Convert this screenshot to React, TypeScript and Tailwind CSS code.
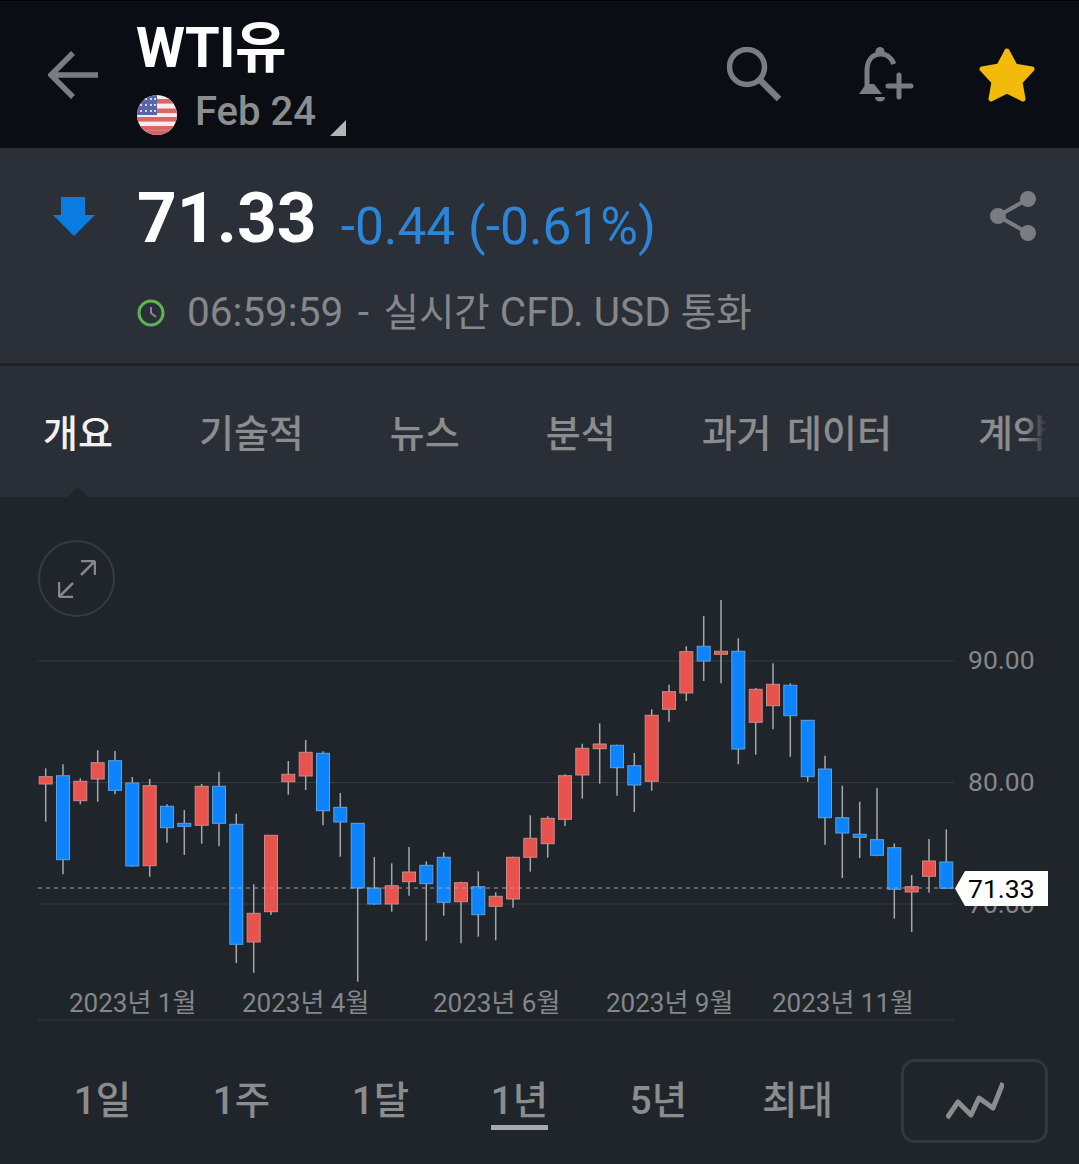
const FONT = "font-['Roboto','Noto_Sans_CJK_KR',sans-serif]"

// x, high, body top, body bottom, low, up (red)
const CANDLES: [number, number, number, number, number, boolean][] = [
  [45.7, 768.3, 776.7, 784, 821.7, true],
  [63, 764.3, 775.7, 859.7, 874.3, false],
  [80.3, 778.3, 781.3, 800.7, 804.3, true],
  [97.7, 750.3, 762.7, 779, 801.7, true],
  [115, 751, 760.7, 790.3, 794.3, false],
  [132.3, 777, 783, 866, 866.7, false],
  [149.7, 779, 785.7, 865.7, 876.7, true],
  [167, 804.3, 806.3, 827.7, 842.7, false],
  [184.3, 810, 823.3, 826.3, 855, false],
  [201.7, 784, 786.3, 825.3, 843.7, true],
  [219, 771.7, 786.3, 823.3, 846.3, false],
  [236.3, 813.7, 824.3, 944.3, 963, false],
  [253.7, 884.3, 913.3, 942, 972.7, true],
  [271, 835.3, 835.3, 911.7, 915, true],
  [288.3, 761, 774.3, 781.7, 794.7, true],
  [305.7, 740, 752.3, 776, 790, true],
  [323, 751.3, 753.3, 810.7, 825.3, false],
  [340.3, 793, 807.3, 822, 856.7, false],
  [357.7, 823.3, 823.3, 888, 981.7, false],
  [374.3, 857, 888, 904, 905, false],
  [391.7, 863.3, 885.7, 904, 911.7, true],
  [409, 847, 872, 881.7, 895.7, true],
  [426.3, 861.3, 865.3, 883.7, 940.7, false],
  [443.7, 852.3, 857.3, 902.3, 915.7, false],
  [461, 881.7, 882.7, 901.7, 943.3, true],
  [478.3, 871.3, 886.7, 914.7, 936.7, false],
  [495.7, 892.3, 896.3, 906.3, 940.3, true],
  [513, 856.7, 857.3, 899, 907.7, true],
  [530.3, 815.3, 838.3, 857.3, 871.7, true],
  [547.7, 816.3, 818.3, 843.7, 857.7, true],
  [565, 774.3, 775.7, 819.3, 826, true],
  [582.3, 743.7, 748.3, 775, 798.7, true],
  [599.7, 723.3, 744, 748.7, 783.7, true],
  [617, 744.7, 745.3, 767.7, 795.7, false],
  [634.3, 753, 765.7, 785, 812, false],
  [651.7, 709.3, 715.3, 781.3, 790.7, true],
  [669, 684.7, 691.7, 709.3, 721.7, true],
  [686.3, 646.3, 651.7, 693, 701, true],
  [703.7, 616, 646.3, 661, 681, false],
  [721, 600, 651.3, 654.3, 683.3, true],
  [738.3, 638.3, 651.3, 749, 764.3, false],
  [755.7, 688, 689.3, 722.3, 754.7, true],
  [773, 663.3, 684.3, 705.7, 729.3, true],
  [790.3, 683.3, 685.3, 715.7, 756.7, false],
  [807.7, 720.3, 720.3, 776.7, 781.7, false],
  [825, 755.7, 769, 817.7, 844.7, false],
  [842.3, 785.7, 817.7, 833, 878, false],
  [859.7, 801.7, 834.3, 837.3, 858, false],
  [877, 788, 839.7, 855.3, 856.3, false],
  [894.3, 843.3, 847.7, 889.3, 918.7, false],
  [911.7, 875, 886.7, 892, 932, true],
  [929, 839, 861, 876.3, 892.7, true],
  [946.3, 829.3, 862, 888.3, 888.3, false],
]

const TABS = ['개요', '기술적', '뉴스', '분석', '과거 데이터', '계약']
const RANGES = ['1일', '1주', '1달', '1년', '5년', '최대']
const MONTHS = [
  { label: '2023년 1월', left: 'left-[69px]' },
  { label: '2023년 4월', left: 'left-[242px]' },
  { label: '2023년 6월', left: 'left-[433px]' },
  { label: '2023년 9월', left: 'left-[606px]' },
  { label: '2023년 11월', left: 'left-[772px]' },
]

function Flag() {
  return (
    <svg viewBox="0 0 40 40" className="w-10 h-10 shrink-0">
      <defs>
        <clipPath id="flag">
          <circle cx="20" cy="20" r="20" />
        </clipPath>
      </defs>
      <g clipPath="url(#flag)">
        <rect width="40" height="40" fill="#f1eeee" />
        {[4, 13.5, 22, 31].map((y) => (
          <rect key={y} x="0" y={y} width="40" height="4.6" fill="#e0636b" />
        ))}
        <rect y="35.5" width="40" height="5" fill="#d9606a" />
        <rect width="20" height="20" fill="#5b64a6" />
        {[4, 10, 16].map((y) =>
          [4, 9, 14, 18].map((x) => <circle key={`${x}-${y}`} cx={x} cy={y} r="1.1" fill="#eef" />),
        )}
      </g>
    </svg>
  )
}

function Chart() {
  return (
    <svg viewBox="0 497 1079 543" className="block w-[1079px] h-[543px]">
      {[661, 782.5, 904].map((y) => (
        <line key={y} x1="38" x2="954" y1={y} y2={y} stroke="#363b42" strokeWidth="1" />
      ))}
      <line x1="38" x2="954" y1="1020" y2="1020" stroke="#363b42" strokeWidth="1" />
      {CANDLES.map(([x, high, top, bottom, low, up]) => (
        <g key={x}>
          <line x1={x} x2={x} y1={high} y2={low} stroke="#a5a7a9" strokeWidth="1.5" />
          <rect
            x={x - 6.5}
            y={top}
            width="13"
            height={bottom - top}
            fill={up ? '#e8544d' : '#0c84fd'}
            stroke={up ? '#c98a88' : '#5da2e2'}
            strokeWidth="1"
          />
        </g>
      ))}
      <line x1="38" x2="954" y1="888" y2="888" stroke="#a0a2a3" strokeWidth="1" strokeDasharray="4 4" />
    </svg>
  )
}

export default function App() {
  return (
    <div className={`${FONT} w-[1079px] h-[1164px] overflow-hidden bg-[#1f252a] flex flex-col`}>
      {/* Header */}
      <header className="h-[148px] bg-[#0a0e14] border-t border-black flex items-start shrink-0">
        <svg viewBox="0 0 50 48" className="w-[50px] h-12 ml-[48px] mt-[50px]" fill="none" stroke="#797d83" strokeWidth="5.5">
          <path d="M50 24H4M25 2 3 24l22 22" />
        </svg>
        <div className="ml-[39px] flex flex-col">
          <div className="-ml-px text-[56px] leading-[56px] mt-[19px] font-bold text-white tracking-[-0.5px]">WTI유</div>
          <div className="flex items-center mt-[16px]">
            <Flag />
            <span className="ml-[18px] mb-[6px] text-[40px] leading-10 text-[#8b8d8f] font-medium">Feb 24</span>
            <svg viewBox="0 0 16 16" className="w-4 h-4 ml-[14px] mt-[26px]">
              <path d="M16 0V16H0Z" fill="#b4b4b4" />
            </svg>
          </div>
        </div>
        <div className="ml-auto mt-[46px] flex items-start">
          <svg viewBox="0 0 54 54" className="w-[54px] h-[54px]" fill="none" stroke="#797d83">
            <circle cx="20" cy="20" r="17.5" strokeWidth="5.5" />
            <path d="M32 32 52 52" strokeWidth="6.5" />
          </svg>
          <svg viewBox="0 0 56 56" className="w-14 h-14 ml-[77px]" fill="none" stroke="#797d83" strokeWidth="5">
            <path d="M36 17C33 10 29 7 23 7 13 7 9 15 9 24V39" />
            <path d="M1 47 8 37H16L24 47Z" fill="#797d83" stroke="none" />
            <circle cx="22" cy="4.5" r="4.5" fill="#797d83" stroke="none" />
            <path d="M17 50H27C27 56 17 56 17 50Z" fill="#797d83" stroke="none" />
            <path d="M41 28V50M30 39H53" strokeLinecap="round" />
          </svg>
          <svg viewBox="0 0 58 56" className="w-[58px] h-14 ml-[64px] mr-[43px]">
            <path
              d="M29 4 37 19 54 22 42 35 45 52 29 44 13 52 16 35 4 22 21 19Z"
              fill="#f2bb0b"
              stroke="#f2bb0b"
              strokeWidth="5"
              strokeLinejoin="round"
            />
          </svg>
        </div>
      </header>

      {/* Quote */}
      <section className="h-[215px] bg-[#2b3038] flex flex-col shrink-0">
        <div className="flex items-start">
          <svg viewBox="0 0 42 39" className="w-[42px] h-[39px] ml-[53px] mt-[49px] shrink-0">
            <path d="M8 0H32V18H42L21 39 0 18H8Z" fill="#0a7be0" />
          </svg>
          <span className="ml-[42px] mt-[32px] text-[69.5px] leading-[78px] font-bold text-white">71.33</span>
          <span className="ml-[24px] mt-[51px] text-[51.5px] leading-[56px] text-[#2b85d9]">-0.44 (-0.61%)</span>
          <svg viewBox="0 0 46 50" className="w-[46px] h-[50px] ml-auto mr-[43px] mt-[43px]" stroke="#797d83" fill="#797d83" strokeWidth="4">
            <path d="M38 8 8 25 38 42" fill="none" />
            <circle cx="38" cy="8" r="6" />
            <circle cx="8" cy="25" r="6" />
            <circle cx="38" cy="42" r="6" />
          </svg>
        </div>
        <div className="flex items-center ml-[137px] mt-[30px]">
          <svg viewBox="0 0 28 28" className="w-7 h-7 shrink-0" fill="none">
            <circle cx="14" cy="14" r="12" stroke="#5fb356" strokeWidth="3" />
            <path d="M14 8V14L19 18" stroke="#85898d" strokeWidth="2" />
          </svg>
          <span className="ml-[22px] text-[40.5px] leading-[48px] text-[#85878a] whitespace-nowrap">
            06:59:59 <span className="mx-[4.5px]">-</span> <span className="text-[38.5px]">실시간</span> CFD. USD <span className="text-[38.5px]">통화</span>
          </span>
        </div>
      </section>

      {/* Tabs */}
      <nav className="relative h-[134px] bg-[#2a2f37] border-t-[3px] border-[#1f2329] flex items-start gap-[86px] pl-[43px] pt-[41px] overflow-hidden whitespace-nowrap shrink-0">
        {TABS.map((t, i) => (
          <span key={t} className={`text-[38px] leading-[54px] font-medium [word-spacing:6px] ${i === 0 ? 'text-[#f1f1f1] font-bold' : 'text-[#8a8c8e]'}`}>
            {t}
          </span>
        ))}
        <div className="absolute top-0 right-0 w-[54px] h-full bg-gradient-to-r from-transparent from-[0%] to-[#2a2f37] to-[41%]" />
        <svg viewBox="0 0 20 10" className="absolute left-[68px] bottom-0 w-5 h-2.5">
          <path d="M0 10 10 0 20 10Z" fill="#1f252a" />
        </svg>
      </nav>

      {/* Chart */}
      <section className="relative shrink-0">
        <Chart />
        <div className="absolute left-[38px] top-[43px] w-[77px] h-[77px] rounded-full border-2 border-[#363b42] flex items-center justify-center">
          <svg viewBox="0 0 38 38" className="w-[38px] h-[38px]" fill="none" stroke="#85878a" strokeWidth="2.5">
            <path d="M37 1H23M37 1V15M37 1 23 15" />
            <path d="M1 37H15M1 37V22M1 37 15 23" />
          </svg>
        </div>
        {[
          { v: '90.00', top: 'top-[147px]' },
          { v: '80.00', top: 'top-[269px]' },
          { v: '70.00', top: 'top-[391px]' },
        ].map(({ v, top }) => (
          <span key={v} className={`absolute left-[968px] ${top} text-[26.5px] leading-[32px] text-[#85878a]`}>
            {v}
          </span>
        ))}
        <div className="absolute left-[955px] top-[374px] w-[93px] h-[35px] bg-white flex items-center pl-[13px] [clip-path:polygon(0_50%,10px_0,100%_0,100%_100%,10px_100%)]">
          <span className="text-[26.5px] leading-[32px] text-black">71.33</span>
        </div>
        {MONTHS.map(({ label, left }) => (
          <span key={label} className={`absolute ${left} top-[490px] text-[26px] leading-[32px] text-[#85878a] whitespace-nowrap`}>
            {label}
          </span>
        ))}
      </section>

      {/* Range selector */}
      <div className="flex items-start pl-[33px] pr-[31px] pt-[19px]">
        {RANGES.map((r) => (
          <div key={r} className="w-[139px] flex justify-center pt-[18px]">
            <span className={`text-[38.5px] leading-[48px] font-medium text-[#8a8c8e] ${r === '1년' ? 'border-b-[5px] border-[#a6a8aa]' : ''}`}>{r}</span>
          </div>
        ))}
        <div className="ml-auto w-[147px] h-[84px] rounded-[14px] border-[3px] border-[#33373f] flex items-center justify-center">
          <svg viewBox="0 0 58 38" className="w-[58px] h-[38px]" fill="none" stroke="#8a8c8e" strokeWidth="5" strokeLinejoin="round">
            <path d="M1 36 12 20 25 33 33 16 47 26 57 1" />
          </svg>
        </div>
      </div>
    </div>
  )
}
